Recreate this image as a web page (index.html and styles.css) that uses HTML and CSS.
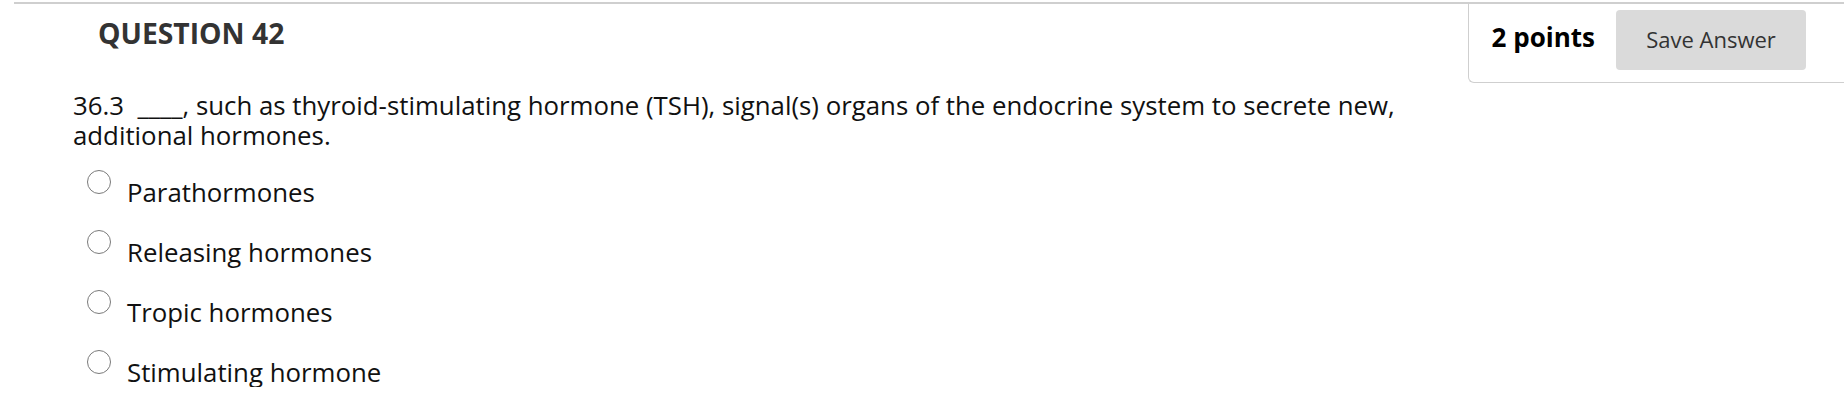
FILE: index.html
```html
<!DOCTYPE html>
<html>
<head>
<meta charset="utf-8">
<link rel="stylesheet" href="styles.css">
</head>
<body>
<div class="question">
  <div class="header">
    <h2 class="title">QUESTION 42</h2>
    <div class="points-box">
      <span class="points">2 points</span>
      <button class="save">Save Answer</button>
    </div>
  </div>
  <p class="prompt">36.3 &nbsp;____, such as thyroid-stimulating hormone (TSH), signal(s) organs of the endocrine system to secrete new, additional hormones.</p>
  <ul class="options">
    <li class="option"><span class="radio"></span><span class="label">Parathormones</span></li>
    <li class="option"><span class="radio"></span><span class="label">Releasing hormones</span></li>
    <li class="option"><span class="radio"></span><span class="label">Tropic hormones</span></li>
    <li class="option"><span class="radio"></span><span class="label">Stimulating hormone</span></li>
  </ul>
</div>
</body>
</html>
```

FILE: styles.css
```css
html, body {
  margin: 0;
  padding: 0;
  background: #fff;
}
body {
  font-family: "Open Sans", "Noto Sans", sans-serif;
  color: #111;
}
.question {
  margin-top: 2px;
  margin-left: 14px;
  border-top: 2px solid #cfcfcf;
}
.header {
  display: flex;
  align-items: flex-start;
}
.title {
  margin: 9px 0 0 84px;
  font-size: 28.3px;
  line-height: 40px;
  font-weight: 700;
  color: #333;
}
.points-box {
  margin-left: auto;
  display: flex;
  align-items: center;
  gap: 21px;
  padding: 6px 38px 12px 23px;
  border-left: 1px solid #cfcfcf;
  border-bottom: 1px solid #cfcfcf;
  border-bottom-left-radius: 6px;
}
.points {
  font-size: 26px;
  font-weight: 700;
  color: #000;
  line-height: 40px;
  margin-bottom: 6px;
}
.save {
  width: 190px;
  height: 60px;
  border: none;
  border-radius: 4px;
  background: #dadada;
  color: #333;
  font-family: "Open Sans", "Noto Sans", sans-serif;
  font-size: 22px;
  padding: 0 0 3px 0;
}
.prompt {
  margin: 7px 0 0 59px;
  max-width: 1380px;
  font-size: 25.8px;
  line-height: 30px;
}
.options {
  list-style: none;
  margin: 20px 0 0 73px;
  padding: 0;
  display: flex;
  flex-direction: column;
  gap: 23px;
}
.option {
  display: flex;
  align-items: flex-start;
  gap: 16px;
}
.radio {
  width: 24px;
  height: 24px;
  box-sizing: border-box;
  border: 1.6px solid #7a7a7a;
  border-radius: 50%;
  flex: none;
}
.label {
  padding-top: 7px;
  font-size: 25.8px;
  line-height: 30px;
}
```
